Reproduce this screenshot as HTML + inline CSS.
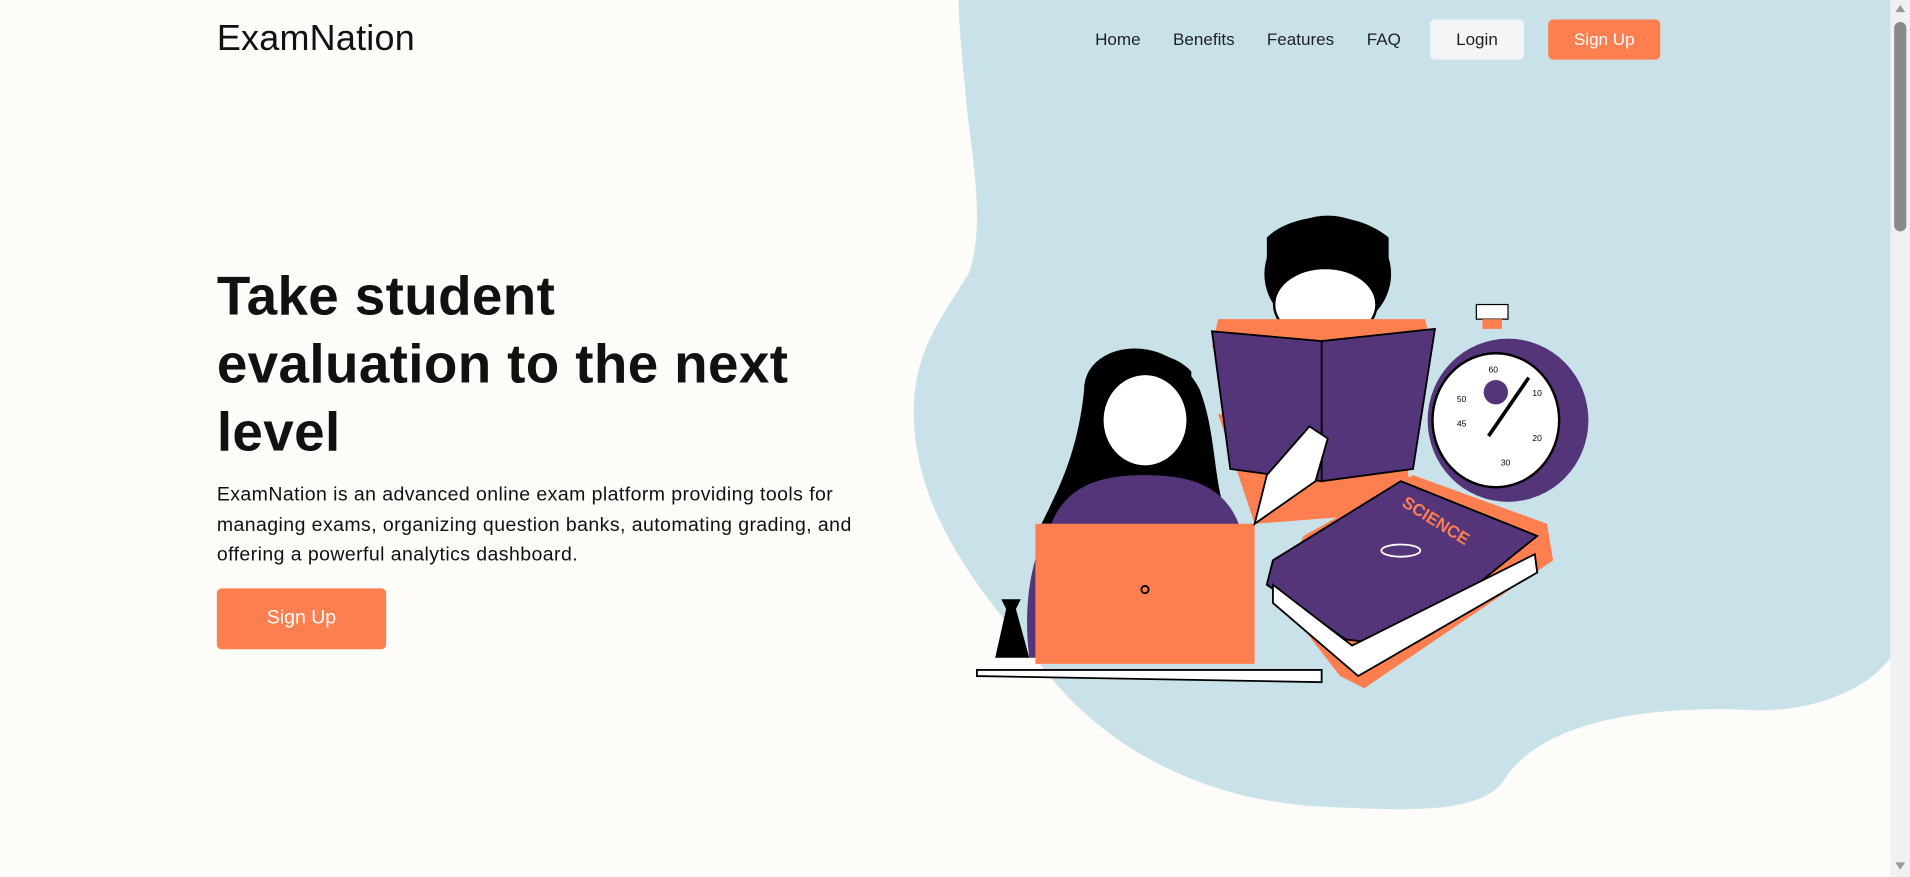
<!DOCTYPE html>
<html><head><meta charset="utf-8"><style>
html,body{margin:0;padding:0;width:1910px;height:877px;overflow:hidden;background:#fdfcf9;}
#w{position:absolute;left:0;top:0;width:1568px;height:720px;transform:scale(1.21811);transform-origin:0 0;font-family:"Liberation Sans",sans-serif;color:#111;}
.logo{position:absolute;left:178px;top:15px;font-size:29.5px;letter-spacing:0.2px;}
.nav a{position:absolute;top:24px;font-size:14px;color:#222;text-decoration:none;}
.btn{position:absolute;border-radius:4px;font-size:14px;text-align:center;}
h1{position:absolute;left:178px;top:215px;margin:0;font-size:45px;line-height:56px;font-weight:bold;width:510px;letter-spacing:0.3px;}
p{position:absolute;left:178px;top:395px;margin:0;font-size:16px;line-height:24.5px;width:540px;letter-spacing:0.35px;color:#111;}
</style></head><body><div id="w">
<svg width="1568" height="720" style="position:absolute;left:0;top:0">
<path d="M787 0 L1552 0 L1552 540 C1530 570 1480 585 1440 583 C1330 578 1260 600 1235 640 C1215 670 1150 665 1080 662 C980 655 900 610 850 540 C800 480 752 420 750 340 C750 290 770 265 795 225 C808 190 800 140 795 100 C790 50 787 20 787 0Z" fill="#c9e2ea"/>
<rect x="1552" y="0" width="16" height="720" fill="#f1f1f1"/>
<rect x="1555" y="18" width="10" height="172" rx="5" fill="#8a8a8a"/>
<path d="M1556 10 L1560 4 L1564 10Z" fill="#999"/><path d="M1556 708 L1560 714 L1564 708Z" fill="#999"/>
<!-- girl -->
<path d="M890 320 C890 280 960 270 985 320 C1000 360 995 400 1010 430 L855 430 C870 400 885 370 890 320Z" fill="#000"/>
<ellipse cx="940" cy="345" rx="35" ry="38" fill="#fff" stroke="#000" stroke-width="2"/>
<path d="M905 320 C920 300 960 300 978 325 L978 305 C960 285 920 285 905 305Z" fill="#000"/>
<path d="M860 440 C870 400 900 390 940 390 C980 390 1010 400 1020 440Z" fill="#55357a"/>
<path d="M862 430 L860 540 L845 540 C840 500 845 460 862 430Z" fill="#55357a"/>
<rect x="850" y="430" width="180" height="115" fill="#fd7f4f"/>
<circle cx="940" cy="484" r="3" fill="none" stroke="#000" stroke-width="1.5"/>
<!-- boy -->
<path d="M1000 340 L1150 340 L1160 420 L1030 430Z" fill="#fd7f4f"/>
<ellipse cx="1090" cy="225" rx="52" ry="48" fill="#000"/>
<ellipse cx="1088" cy="250" rx="42" ry="30" fill="#fff" stroke="#000" stroke-width="2"/>
<path d="M1040 215 C1060 190 1120 190 1140 220 L1140 195 C1110 170 1060 175 1040 195Z" fill="#000"/>
<path d="M1000 262 L1170 262 L1175 285 L995 285Z" fill="#fd7f4f"/>
<path d="M995 272 L1085 280 L1085 395 L1010 385Z M1085 280 L1178 270 L1160 385 L1085 395Z" fill="#55357a" stroke="#000" stroke-width="1.5"/>
<path d="M1040 390 L1075 350 L1090 360 L1080 395 L1030 430Z" fill="#fff" stroke="#000" stroke-width="1.5"/>
<!-- stopwatch -->
<rect x="1212" y="250" width="26" height="12" fill="#fff" stroke="#000"/>
<rect x="1217" y="262" width="16" height="8" fill="#fd7f4f"/>
<ellipse cx="1238" cy="345" rx="66" ry="67" fill="#55357a"/>
<ellipse cx="1228" cy="345" rx="52" ry="55" fill="#fff" stroke="#000" stroke-width="2"/>
<circle cx="1228" cy="322" r="10" fill="#55357a"/>
<path d="M1222 358 L1255 310" stroke="#000" stroke-width="3"/>
<g font-size="7" fill="#000" font-family="Liberation Sans"><text x="1222" y="306">60</text><text x="1258" y="325">10</text><text x="1258" y="362">20</text><text x="1232" y="382">30</text><text x="1196" y="350">45</text><text x="1196" y="330">50</text></g>
<!-- science book -->
<path d="M1070 440 L1160 390 L1270 430 L1275 460 L1120 565 L1100 555 L1050 490Z" fill="#fd7f4f"/>
<path d="M1045 460 L1150 395 L1262 440 L1150 530 L1105 525 L1040 480Z" fill="#55357a" stroke="#000" stroke-width="1.5"/>
<path d="M1045 480 L1110 530 L1260 455 L1262 470 L1115 555 L1045 495Z" fill="#fff" stroke="#000" stroke-width="1.5"/>
<text x="1150" y="415" font-size="14" fill="#fd7f4f" font-weight="bold" transform="rotate(32 1150 415)" font-family="Liberation Sans">SCIENCE</text>
<ellipse cx="1150" cy="452" rx="16" ry="5" fill="none" stroke="#fff" stroke-width="1.5"/>
<!-- desk & flask -->
<path d="M802 550 L1085 550 L1085 560 L802 555Z" fill="#fff" stroke="#000" stroke-width="1.5"/>
<path d="M822 492 L838 492 L834 500 L845 540 L817 540 L826 500Z" fill="#000"/>
</svg>
<div class="logo">ExamNation</div>
<div class="nav"><a style="left:899px">Home</a><a style="left:963px">Benefits</a><a style="left:1040px">Features</a><a style="left:1122px">FAQ</a></div>
<div class="btn" style="left:1174px;top:16px;width:77px;height:33px;line-height:33px;background:#f3f5f7;color:#222">Login</div>
<div class="btn" style="left:1271px;top:16px;width:92px;height:33px;line-height:33px;background:#fd7f4f;color:#fff">Sign Up</div>
<h1>Take student evaluation to the next level</h1>
<p>ExamNation is an advanced online exam platform providing tools for managing exams, organizing question banks, automating grading, and offering a powerful analytics dashboard.</p>
<div class="btn" style="left:178px;top:483px;width:139px;height:50px;line-height:50px;background:#fd7f4f;color:#fff;font-size:16px">Sign Up</div>
</div></body></html>
